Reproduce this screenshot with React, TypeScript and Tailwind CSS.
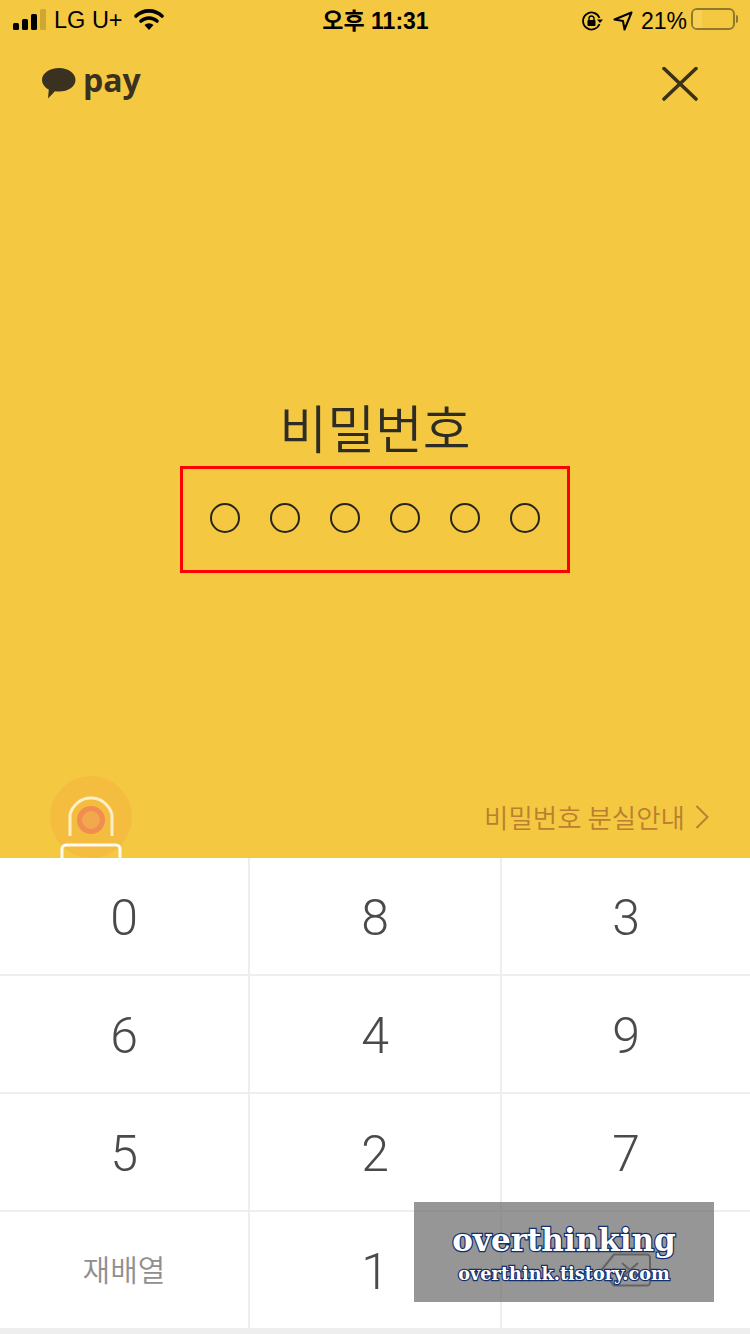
import React from "react";

const sans = "font-['Liberation_Sans','Noto_Sans_CJK_KR',sans-serif]";

function Key({ children, last }: { children: React.ReactNode; last?: boolean }) {
  return (
    <div className={`flex items-center justify-center border-[#eeeeee] ${last ? "" : "border-r-2"}`}>
      {children}
    </div>
  );
}

const rows = [
  ["0", "8", "3"],
  ["6", "4", "9"],
  ["5", "2", "7"],
];

function Digit({ v }: { v: string }) {
  return <span className="mt-[3px] font-['Roboto',sans-serif] text-[50px] leading-none font-light text-[#4a4a4a]">{v}</span>;
}

export default function App() {
  return (
    <div className={`relative flex h-[1334px] w-[750px] flex-col overflow-hidden bg-[#efeeef] ${sans}`}>
      <section className="flex h-[858px] flex-col bg-[#f5c842]">
        {/* status bar */}
        <div className="flex h-[40px] items-center text-black">
          <div className="flex flex-1 items-center pl-[13px]">
            <svg width="34" height="22" viewBox="0 0 34 22">
              <rect x="0" y="14" width="6" height="7" rx="1.5" fill="#000" />
              <rect x="9" y="10" width="6" height="11" rx="1.5" fill="#000" />
              <rect x="18" y="5" width="6" height="16" rx="1.5" fill="#000" />
              <rect x="27" y="0" width="6" height="21" rx="1.5" fill="#cda733" />
            </svg>
            <span className="ml-[7px] mt-[2px] text-[23.5px] leading-none">LG U+</span>
            <svg width="30" height="22" viewBox="0 0 30 22" className="ml-[11px] mt-[-2px]">
              <path d="M2 8 A19 19 0 0 1 28 8" fill="none" stroke="#000" strokeWidth="3.6" strokeLinecap="round" />
              <path d="M7 13 A12 12 0 0 1 23 13" fill="none" stroke="#000" strokeWidth="3.6" strokeLinecap="round" />
              <path d="M15 22 L10.5 17 A6.5 6.5 0 0 1 19.5 17 Z" fill="#000" />
            </svg>
          </div>
          <span className="mt-[2px] text-[23px] leading-none font-bold">오후 11:31</span>
          <div className="flex flex-1 items-center justify-end pr-[12px]">
            <svg width="22" height="20" viewBox="0 0 22 20" className="mt-[1px]">
              <path d="M18.5 7 A8.5 8.5 0 1 0 18.5 13" fill="none" stroke="#000" strokeWidth="1.8" />
              <path d="M16 8.5 L22 8.5 L19 12 Z" fill="#000" />
              <rect x="6.5" y="9" width="8" height="6" rx="1" fill="#000" />
              <path d="M8 9 V7.5 A2.5 2.5 0 0 1 13 7.5 V9" fill="none" stroke="#000" strokeWidth="1.4" />
            </svg>
            <svg width="20" height="20" viewBox="0 0 20 20" className="ml-[10px] mt-[1px]">
              <path d="M18.5 1.5 L1.5 8.5 L10 10 L11.5 18.5 Z" fill="none" stroke="#000" strokeWidth="2" strokeLinejoin="round" />
            </svg>
            <span className="ml-[8px] mt-[2px] text-[23px] leading-none">21%</span>
            <div className="ml-[4px] mt-[-2px] flex items-center">
              <div className="h-[22px] w-[44px] rounded-[6px] border-2 border-[#8f7a2c]">
                <div className="h-full w-[9px] rounded-l-[4px] bg-[#f7cf55]" />
              </div>
              <div className="ml-[1px] h-[8px] w-[2px] rounded-r-[2px] bg-[#8f7a2c]" />
            </div>
          </div>
        </div>

        {/* header */}
        <div className="mt-[27px] flex items-start justify-between pl-[42px] pr-[52px]">
          <div className="flex items-start">
            <svg width="34" height="32" viewBox="0 0 34 32" className="mt-[1px]">
              <path d="M17 0 C26.4 0 33.5 5.2 33.5 11.8 C33.5 18.5 26.4 23.6 17 23.6 C15.6 23.6 14.2 23.5 13 23.2 L6 30.5 L6.8 21.6 C2.6 19.4 0 15.9 0 11.8 C0 5.2 7.6 0 17 0 Z" fill="#3b3120" />
            </svg>
            <span className="ml-[7px] mt-[-7px] font-['Open_Sans',sans-serif] text-[32px] leading-[40px] font-bold text-[#3b3120]">pay</span>
          </div>
          <svg width="36" height="34" viewBox="0 0 36 34">
            <path d="M2 1.5 L34 32 M34 1.5 L2 32" fill="none" stroke="#3a3218" strokeWidth="3.6" strokeLinecap="round" />
          </svg>
        </div>

        {/* password */}
        <div className="mt-[295px] flex flex-col items-center">
          <h1 className="font-['Noto_Sans_CJK_KR',sans-serif] text-[52px] leading-[62px] font-[350] text-[#2d2c25]">비밀번호</h1>
          <div className="mt-[8px] flex h-[107px] w-[390px] items-center justify-center gap-[30px] border-[3px] border-[#ff0000] pb-[3px]">
            {[0, 1, 2, 3, 4, 5].map((i) => (
              <div key={i} className="h-[30px] w-[30px] rounded-full border-2 border-[#26261f]" />
            ))}
          </div>
        </div>

        {/* bottom row */}
        <div className="mt-auto flex items-start justify-between pl-[50px] pr-[41px]">
          <svg width="82" height="82" viewBox="0 0 82 82" className="block">
            <circle cx="41" cy="41" r="41" fill="#f4bd3f" />
            <path d="M20 60 V39 A21.5 21.5 0 0 1 62 39 V60" fill="none" stroke="#fdf0c8" strokeWidth="3" />
            <circle cx="41" cy="44" r="11.5" fill="#f2a84e" stroke="#f18d50" strokeWidth="5" />
            <path d="M12 82 V73 A4 4 0 0 1 16 69 H66 A4 4 0 0 1 70 73 V82" fill="none" stroke="#fffaf0" strokeWidth="3" />
          </svg>
          <div className="mt-[26px] flex items-center">
            <span className="font-['Noto_Sans_CJK_KR',sans-serif] text-[26.5px] leading-[30px] font-[350] text-[#b9802f]">비밀번호 분실안내</span>
            <svg width="14" height="24" viewBox="0 0 14 24" className="ml-[10px]">
              <path d="M1.5 1 L12.5 12 L1.5 23" fill="none" stroke="#b9802f" strokeWidth="2" />
            </svg>
          </div>
        </div>
      </section>

      {/* keypad */}
      <div className="bg-white">
        {rows.map((r, i) => (
          <div key={i} className="grid h-[118px] grid-cols-[250px_252px_248px] border-b-2 border-[#eeeeee]">
            {r.map((v, j) => (
              <Key key={v} last={j === 2}>
                <Digit v={v} />
              </Key>
            ))}
          </div>
        ))}
        <div className="grid h-[116px] grid-cols-[250px_252px_248px]">
          <Key>
            <span className="mb-[4px] font-['Noto_Sans_CJK_KR',sans-serif] text-[30px] leading-none font-[350] text-[#8f8f8f]">재배열</span>
          </Key>
          <Key>
            <Digit v="1" />
          </Key>
          <Key last>
            <svg width="52" height="34" viewBox="0 0 52 34" className="mt-[-1px]">
              <path d="M14 1.5 H47 A3 3 0 0 1 50 4.5 V29.5 A3 3 0 0 1 47 32.5 H14 L1.5 17 Z" fill="none" stroke="#4a4a4a" strokeWidth="2" strokeLinejoin="round" />
              <path d="M22 10 L38 24 M38 10 L22 24" fill="none" stroke="#4a4a4a" strokeWidth="2" />
            </svg>
          </Key>
        </div>
      </div>

      {/* watermark overlay */}
      <div className="absolute left-[414px] top-[1202px] flex h-[100px] w-[300px] flex-col items-center bg-[rgba(110,110,110,0.72)] pt-[18px] font-['DejaVu_Serif',serif] font-bold text-white">
        <span className="text-[31px] leading-[40px] [paint-order:stroke_fill] [-webkit-text-stroke:2.5px_#12306e]">overthinking</span>
        <span className="text-[17.7px] leading-[28px] [paint-order:stroke_fill] [-webkit-text-stroke:2.5px_#12306e]">overthink.tistory.com</span>
      </div>
    </div>
  );
}
